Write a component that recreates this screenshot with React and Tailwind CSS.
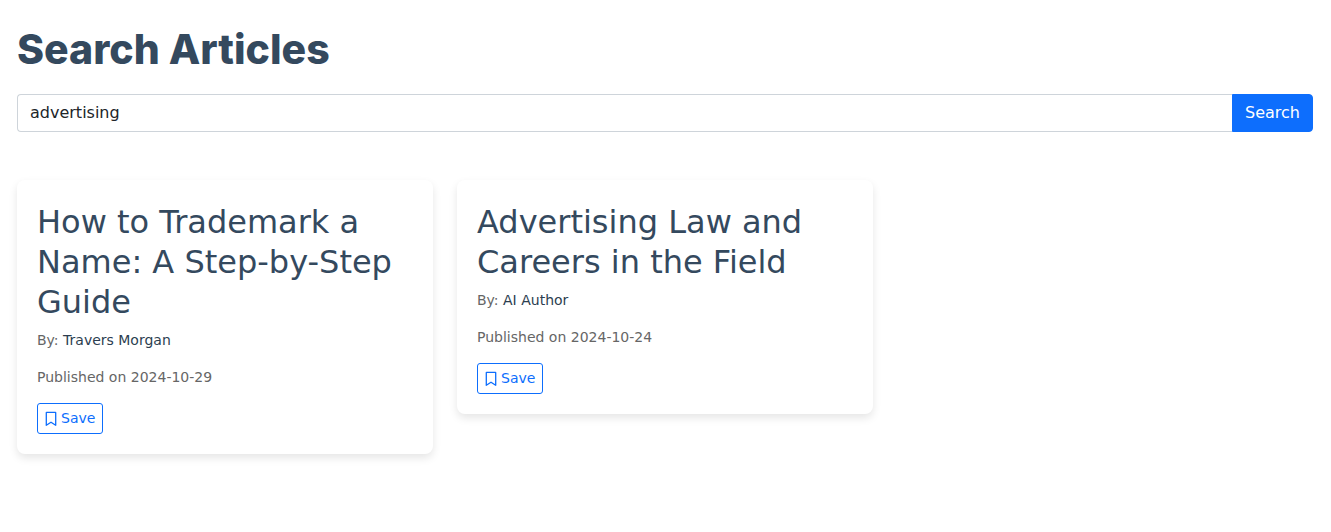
import { useState } from "react";

const ARTICLES = [
  {
    id: 1,
    title: "How to Trademark a Name: A Step-by-Step Guide",
    author: "Travers Morgan",
    date: "2024-10-29",
  },
  {
    id: 2,
    title: "Advertising Law and Careers in the Field",
    author: "AI Author",
    date: "2024-10-24",
  },
];

function BookmarkIcon() {
  return (
    <svg
      viewBox="0 0 12 16"
      className="h-4 w-3"
      fill="none"
      stroke="currentColor"
      strokeWidth="1.3"
      strokeLinejoin="round"
      aria-hidden="true"
    >
      <path d="M1.6 1.3h8.8a.3.3 0 0 1 .3.3v12.7L6 11.2l-4.7 3.1V1.6a.3.3 0 0 1 .3-.3Z" />
    </svg>
  );
}

function ArticleCard({ article }) {
  return (
    <article className="rounded-lg bg-white px-5 pt-[22px] pb-5 shadow-[0_4px_8px_rgba(0,0,0,0.1)]">
      <h2 className="mb-2 text-[32px] leading-10 text-[#34495e]">
        <a href={`#article-${article.id}`}>{article.title}</a>
      </h2>
      <p className="mb-4 text-sm leading-[21px] text-[#666]">
        By:{" "}
        <a href={`#author-${article.id}`} className="text-[#2c3e50]">
          {article.author}
        </a>
      </p>
      <p className="mb-[15px] text-sm leading-[21px] text-[#666]">
        Published on {article.date}
      </p>
      <button
        type="button"
        className="flex items-center gap-1 rounded-[3px] border border-[#0d6efd] px-[7px] py-1 text-sm leading-[21px] text-[#0d6efd] hover:bg-[#0d6efd] hover:text-white"
      >
        <BookmarkIcon />
        Save
      </button>
    </article>
  );
}

export default function App() {
  const [query, setQuery] = useState("advertising");

  return (
    <main className="pt-[25px] pr-[18px] pb-12 pl-[17px] font-['Verdana','DejaVu_Sans',sans-serif]">
      <h1 className="mb-[21px] font-['Inter',sans-serif] text-[41px] leading-12 font-extrabold text-[#34495e]">
        Search Articles
      </h1>

      <form className="mb-12 flex" onSubmit={(e) => e.preventDefault()}>
        <input
          type="text"
          aria-label="Search articles"
          value={query}
          onChange={(e) => setQuery(e.target.value)}
          className="min-w-0 flex-1 rounded-l border border-r-0 border-[#ced4da] bg-white px-3 py-1.5 text-base text-[#212529] outline-none"
        />
        <button
          type="submit"
          className="rounded-r border border-[#0d6efd] bg-[#0d6efd] px-3 py-1.5 text-base text-white hover:bg-[#0b5ed7]"
        >
          Search
        </button>
      </form>

      <div className="grid items-start gap-6 sm:grid-cols-2 lg:grid-cols-3">
        {ARTICLES.map((article) => (
          <ArticleCard key={article.id} article={article} />
        ))}
      </div>
    </main>
  );
}
